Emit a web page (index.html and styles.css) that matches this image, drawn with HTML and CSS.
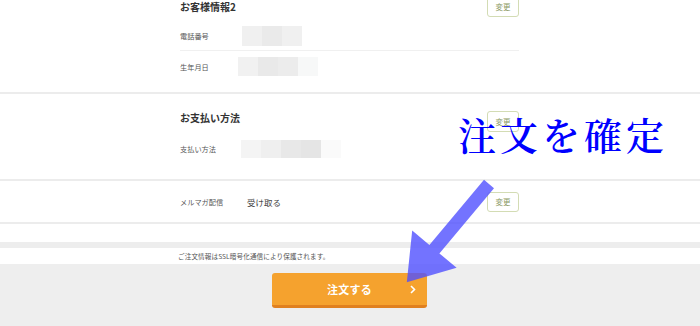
FILE: index.html
```html
<!DOCTYPE html>
<html lang="ja">
<head>
<meta charset="utf-8">
<link rel="stylesheet" href="styles.css">
</head>
<body>
<div class="page">
  <section class="sec sec1">
    <div class="inner">
      <div class="head">
        <h2 class="title">お客様情報2</h2>
        <button class="chg">変更</button>
      </div>
      <div class="row row-tel">
        <span class="lbl">電話番号</span>
        <span class="blur blur-tel"><i class="s c1"></i><i class="s c2"></i><i class="s c3"></i></span>
      </div>
      <div class="row row-birth">
        <span class="lbl">生年月日</span>
        <span class="blur blur-birth"><i class="s c4"></i><i class="s c5"></i><i class="s c6"></i><i class="s c7"></i></span>
      </div>
    </div>
  </section>
  <section class="sec sec2">
    <div class="inner">
      <div class="head head2">
        <h2 class="title">お支払い方法</h2>
        <button class="chg chg2">変更</button>
      </div>
      <div class="row row-pay">
        <span class="lbl">支払い方法</span>
        <span class="blur blur-pay"><i class="s p1"></i><i class="s p2"></i><i class="s p3"></i><i class="s p4"></i><i class="s p5"></i></span>
      </div>
    </div>
  </section>
  <section class="sec sec3">
    <div class="inner">
      <div class="row row-mail">
        <span class="lbl lbl-mail">メルマガ配信</span>
        <span class="val">受け取る</span>
        <button class="chg chg3">変更</button>
      </div>
    </div>
  </section>
  <div class="spacer"></div>
  <div class="band"></div>
  <div class="notice"><p class="notice-text">ご注文情報はSSL暗号化通信により保護されます。</p></div>
  <footer class="foot">
    <button class="order">
      <span></span>
      <span class="order-text">注文する</span>
      <svg class="chev" width="6" height="9" viewBox="0 0 6 9"><polyline points="1,1 4.5,4.5 1,8" fill="none" stroke="#fff" stroke-width="1.6"/></svg>
    </button>
  </footer>

  <div class="callout">注文を確定</div>
  <svg class="arrow" width="700" height="326" viewBox="0 0 700 326">
    <polygon points="484,179.8 494,188.2 439.4,253.4 456.6,267.8 406.8,282.2 412.2,230.6 429.4,245" fill="#5050ff" fill-opacity="0.8"/>
  </svg>
</div>
</body>
</html>
```
FILE: styles.css
```css
* { box-sizing: border-box; margin: 0; padding: 0; }
html, body { width: 700px; height: 326px; overflow: hidden; background: #fff; }
body { font-family: "Noto Sans CJK JP", "Noto Sans", sans-serif; color: #333; }
.page { position: relative; width: 700px; height: 326px; display: flex; flex-direction: column; }

.sec { border-bottom: 2px solid #ececec; }
.inner { margin-left: 180px; width: 340px; display: flex; flex-direction: column; }

.head { display: flex; justify-content: space-between; align-items: center; height: 20px; }
.title { font-size: 10px; font-weight: bold; color: #333; line-height: 14px; }

.chg {
  width: 32px; height: 20px;
  border: 1px solid #d3dcb4; border-radius: 3px; background: #fff;
  color: #8b9a63; font-family: inherit; font-size: 7.5px; line-height: 1;
  margin-right: 1px;
}

.sec1 { margin-top: -3px; height: 97px; }
.row { display: flex; align-items: center; }
.lbl { font-size: 7.2px; color: #555; width: 58px; flex: none; }
.row-tel { margin-top: 9px; height: 20px; }
.row-birth { margin-top: 4px; border-top: 1px solid #f0f0f0; padding-top: 6px; height: 26px; margin-right: 1px; }

.blur { display: flex; }
.s { display: block; width: 20px; }
.blur-tel { margin-left: 4px; }
.blur-tel .s { height: 20px; }
.blur-birth .s { height: 19px; }
.c1 { background: #f0f0f0; } .c2 { background: #eaeaea; } .c3 { background: #f0f0f0; }
.c4 { background: #f1f1f1; } .c5 { background: #e9e9e9; } .c6 { background: #ececec; } .c7 { background: #f7f8f8; }

.sec2 { padding-top: 17px; padding-bottom: 21px; }
.head2 { align-items: flex-start; height: 21px; }
.chg2 { height: 21px; }
.row-pay { margin-top: 8px; height: 18px; }
.blur-pay { margin-left: 3px; }
.blur-pay .s { height: 18px; }
.p1 { background: #f4f4f4; } .p2 { background: #efefef; } .p3 { background: #e8e8e8; } .p4 { background: #e5e5e5; } .p5 { background: #fafafa; }

.sec3 { padding-top: 11px; padding-bottom: 10px; }
.row-mail { height: 20px; }
.lbl-mail { width: 67px; }
.val { font-size: 8.5px; color: #444; flex: 1; }

.spacer { height: 18px; background: #fff; }
.band { height: 6px; background: #ededed; }
.notice { height: 16px; background: #fff; display: flex; align-items: center; padding-left: 178px; }
.notice-text { font-size: 6.6px; color: #555; letter-spacing: 0.1px; }

.foot { flex: 1; background: #eeeeee; display: flex; justify-content: center; padding-top: 9px; }
.order {
  width: 155px; height: 35px; margin-left: -1px;
  background: #f5a22e; border: none; border-bottom: 3px solid #e0801f; border-radius: 3px;
  display: grid; grid-template-columns: 1fr auto 1fr; align-items: center;
  font-family: inherit; color: #fff;
}
.order-text { font-size: 11px; font-weight: bold; letter-spacing: 0.3px; }
.chev { justify-self: end; margin-right: 11px; }

.callout {
  position: absolute; left: 458px; top: 115px;
  font-family: "Noto Serif CJK JP", "Noto Sans CJK JP", serif;
  font-size: 38px; font-weight: 600; line-height: 1; color: #0000ff; letter-spacing: 4px; white-space: nowrap;
}
.arrow { position: absolute; left: 0; top: 0; pointer-events: none; }
```
